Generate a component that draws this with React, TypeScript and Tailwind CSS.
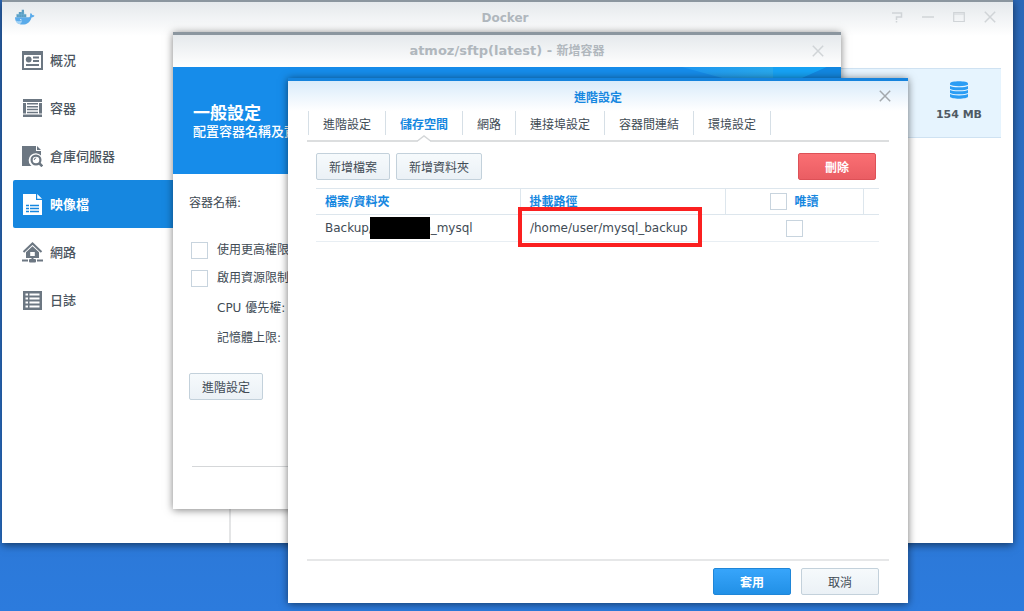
import type { ReactNode } from 'react';
import clsx from 'clsx';

// ---------------------------------------------------------------------------
// Icons
// ---------------------------------------------------------------------------

function WhaleIcon() {
  return (
    <svg width="21" height="17" viewBox="0 0 21 17" aria-hidden>
      <path d="M1 8.2h13.6c1.1 0 1.6-.6 1.5-1.8-.1-.9.1-1.7.7-2.4.9.6 1.3 1.3 1.4 2.2.8-.2 1.6 0 2.3.5-.6 1.2-1.6 1.7-3 1.7C16.300 13 13.300 15.500 8.500 15.500 3.600 15.500 1 12.700 1 8.200z" fill="#5aabea" />
      <path d="M2.500 5.300h9.800v2.900H2.500zM4.800 3h5.200v2.300H4.800zM7.700.8H10V3H7.700z" fill="#5a9dc2" />
      <path d="M5 5.300v2.900M7.400 3v5.200M9.900 3v5.200M2.500 5.300H12" stroke="#79bbdf" strokeWidth=".4" />
      <path d="M1.500 11.500c2.500 1.300 5 .9 6.600-.3-.2 2-1 3.300-2.300 3.900-2.300-.4-3.700-1.700-4.300-3.600z" fill="#a5d3f5" />
      <circle cx="6.800" cy="10.600" r=".6" fill="#fff" />
    </svg>
  );
}

function OverviewIcon() {
  return (
    <svg width="21" height="21" viewBox="0 0 21 21" aria-hidden>
      <path d="M0 1h21v19H0zM2 5v13h17V5z" fill="currentColor" fillRule="evenodd" />
      <circle cx="6.700" cy="9.500" r="2.900" fill="currentColor" />
      <path d="M11 7.500h6M11 11h6M4 15h13" stroke="currentColor" strokeWidth="1.800" />
    </svg>
  );
}

function ContainerIcon() {
  return (
    <svg width="21" height="21" viewBox="0 0 21 21" aria-hidden>
      <path d="M1 1h19v3H1zM1 16.500h19v2.500H1zM1 5h3v10.500H1zM17 5h3v10.500h-3z" fill="currentColor" />
      <path d="M5 5.800h11M5 8.700h11M5 11.600h11M5 14.500h11" stroke="currentColor" strokeWidth="1.500" />
    </svg>
  );
}

function RegistryIcon() {
  return (
    <svg width="21" height="21" viewBox="0 0 21 21" aria-hidden>
      <path d="M0 0h14v5h5v4.500a7 7 0 0 0-10.500 9.500l1 1H0z" fill="currentColor" />
      <path d="M15 0l4 4h-4z" fill="currentColor" />
      <circle cx="14" cy="14" r="4.400" fill="none" stroke="currentColor" strokeWidth="2.200" />
      <path d="M17 17l3.300 3.300" stroke="currentColor" strokeWidth="2.600" />
      <path d="M12.200 14a2 2 0 0 1 2-2" fill="none" stroke="currentColor" />
    </svg>
  );
}

function ImageIcon() {
  return (
    <svg width="21" height="21" viewBox="0 0 21 21" aria-hidden>
      <path d="M1 0h13v6h6v15H1z" fill="currentColor" />
      <path d="M15.200 0L20 4.800h-4.800z" fill="currentColor" />
      <path d="M4 11.500h3M8 11.500h9M4 14.500h3M8 14.500h9M4 17.500h3M8 17.500h9" stroke="#1687e0" strokeWidth="1.400" />
    </svg>
  );
}

function NetworkIcon() {
  return (
    <svg width="21" height="21" viewBox="0 0 21 21" aria-hidden>
      <path d="M1.500 10L10.500 1.500l9 8.500" fill="none" stroke="currentColor" strokeWidth="2" />
      <path d="M10.500 4.300l6.500 6V16H4v-5.700zM8.200 10v4h4.600v-4z" fill="currentColor" fillRule="evenodd" />
      <path d="M0 18.500h6M15 18.500h6M10.500 15v3" stroke="currentColor" strokeWidth="2" />
      <rect x="7" y="17" width="7" height="3.500" rx="1" fill="currentColor" />
    </svg>
  );
}

function LogIcon() {
  return (
    <svg width="21" height="21" viewBox="0 0 21 21" aria-hidden>
      <path d="M1 1h19v19H1z" fill="currentColor" />
      <path d="M3.500 4.500H6M7.500 4.500h10M3.500 8.500H6M7.500 8.500h10M3.500 12.500H6M7.500 12.500h10M3.500 16.500H6M7.500 16.500h10" stroke="#fff" strokeWidth="2" />
    </svg>
  );
}

function DatabaseIcon() {
  return (
    <svg width="18" height="18" viewBox="0 0 18 18" aria-hidden>
      <path d="M0 2.500C0-.4 18-.4 18 2.500v13c0 2.900-18 2.900-18 0z" fill="#2b9df4" />
      <path d="M0 4.200c2 2 16 2 18 0M0 8.300c2 2 16 2 18 0M0 12.400c2 2 16 2 18 0" fill="none" stroke="#e6f4fe" strokeWidth="1.100" />
    </svg>
  );
}

function CloseIcon() {
  return (
    <svg width="12" height="12" viewBox="0 0 12 12" aria-hidden>
      <path d="M.8.8l10.400 10.400M11.200.8L.8 11.200" stroke="currentColor" strokeWidth="1.500" />
    </svg>
  );
}

function HelpIcon() {
  return (
    <svg width="12" height="12" viewBox="0 0 12 12" aria-hidden>
      <path d="M1 2h9.500v4H5.500v3M5.500 10v1.500" fill="none" stroke="currentColor" strokeWidth="1.500" />
    </svg>
  );
}

function MinimizeIcon() {
  return (
    <svg width="12" height="12" viewBox="0 0 12 12" aria-hidden>
      <path d="M0 6h12" stroke="currentColor" strokeWidth="1.500" />
    </svg>
  );
}

function MaximizeIcon() {
  return (
    <svg width="12" height="12" viewBox="0 0 12 12" aria-hidden>
      <path d="M.7 1.500h10.600v9H.7zM.7 3h10.600" fill="none" stroke="currentColor" strokeWidth="1.200" />
    </svg>
  );
}

// ---------------------------------------------------------------------------
// Shared controls
// ---------------------------------------------------------------------------

const buttonStyles = {
  plain: 'border-[#c3d1db] bg-linear-to-b from-[#f6fafc] to-[#ebf1f6] text-[#414b55]',
  primary: 'border-[#1f86d8] bg-linear-to-b from-[#37a5fb] to-[#2190e6] font-bold text-white',
  danger: 'border-[#dd5157] bg-linear-to-b from-[#fa6f73] to-[#ea5d63] font-bold text-white',
};

interface ButtonProps {
  variant?: keyof typeof buttonStyles;
  wide?: boolean;
  children: ReactNode;
}

function Button({ variant = 'plain', wide, children }: ButtonProps) {
  return (
    <button
      type="button"
      className={clsx(
        'flex h-[27px] items-center justify-center rounded-xs border pt-0.5 text-xs',
        wide ? 'w-[78px]' : 'px-3',
        buttonStyles[variant],
      )}
    >
      {children}
    </button>
  );
}

const checkboxClass = 'block size-[17px] shrink-0 appearance-none border border-[#c8d4de] bg-white';

// ---------------------------------------------------------------------------
// Main window
// ---------------------------------------------------------------------------

const navItems = [
  { label: '概況', icon: <OverviewIcon /> },
  { label: '容器', icon: <ContainerIcon /> },
  { label: '倉庫伺服器', icon: <RegistryIcon /> },
  { label: '映像檔', icon: <ImageIcon />, active: true },
  { label: '網路', icon: <NetworkIcon /> },
  { label: '日誌', icon: <LogIcon /> },
];

function DockerWindow() {
  return (
    <section className="absolute top-0 right-[11px] bottom-[68px] left-0.5 flex flex-col border-t-2 border-[#8b969f] bg-white shadow-[0_2px_8px_rgba(0,0,0,0.55)]">
      <header className="grid h-[34px] shrink-0 grid-cols-[1fr_auto_1fr] items-center bg-linear-to-b from-[#e5e9ec] to-white pr-[17px] pb-1 pl-3">
        <WhaleIcon />
        <h1 className="pt-0.5 text-xs font-bold text-[#b0b7bd]">Docker</h1>
        <div className="flex justify-end gap-[19px] text-[#d0d4d7]">
          <button type="button" aria-label="說明"><HelpIcon /></button>
          <button type="button" aria-label="最小化"><MinimizeIcon /></button>
          <button type="button" aria-label="最大化"><MaximizeIcon /></button>
          <button type="button" aria-label="關閉"><CloseIcon /></button>
        </div>
      </header>
      <div className="flex min-h-0 flex-1">
        <nav className="w-[229px] shrink-0 border-r-2 border-[#e4e5e6] pl-[11px]">
          {navItems.map((item) => (
            <a
              key={item.label}
              href="#"
              className={clsx(
                'flex h-12 items-center gap-[7px] rounded-xs pl-[9px] text-[13px]',
                item.active ? 'bg-[#1687e0] font-bold text-white' : 'font-medium text-[#6c7782]',
              )}
            >
              {item.icon}
              <span className={clsx('pt-0.5', item.active ? 'text-white' : 'text-[#4b5560]')}>{item.label}</span>
            </a>
          ))}
        </nav>
        <main className="flex-1 pt-8 pr-3 pl-3">
          <div className="flex h-[70px] justify-end border-y border-[#cfe2f2] bg-[#e6f4fe] pr-[19px]">
            <div className="flex flex-col items-center gap-2 pt-3 text-[11px] font-bold text-[#505a64]">
              <DatabaseIcon />
              <span className="leading-4">154 MB</span>
            </div>
          </div>
        </main>
      </div>
    </section>
  );
}

// ---------------------------------------------------------------------------
// New container wizard
// ---------------------------------------------------------------------------

function WizardWindow() {
  return (
    <section className="absolute top-8 right-[183px] bottom-[102px] left-[173px] flex flex-col border-t-3 border-[#8b969f] bg-white shadow-[0_1px_8px_rgba(0,0,0,0.5)]">
      <header className="grid h-8 shrink-0 grid-cols-[1fr_auto_1fr] items-center bg-linear-to-b from-[#e5e9ec] to-white px-[17px]">
        <h2 className="col-start-2 text-[13px] font-bold text-[#b0b7bd]">
          atmoz/sftp(latest) - <span className="text-xs">新增容器</span>
        </h2>
        <button type="button" aria-label="關閉" className="justify-self-end text-[#d0d4d7]"><CloseIcon /></button>
      </header>
      <div className="relative flex h-[107px] shrink-0 flex-col justify-center bg-[#168cea] pt-[3px] pl-5 text-white">
        <svg className="absolute top-0 right-0" width="180" height="107" viewBox="0 0 180 107" aria-hidden>
          <defs>
            <linearGradient id="banner" x1="0" x2="1">
              <stop offset="0" stopColor="#1e97f0" />
              <stop offset="1" stopColor="#28a8ec" />
            </linearGradient>
          </defs>
          <path d="M21 0h91v12H65z" fill="url(#banner)" />
          <path d="M112 0h54l-27 12h-27z" fill="#16a2f4" />
          <path d="M166 0h14v12h-41z" fill="#1287e0" />
        </svg>
        <h3 className="text-[17px] leading-5 font-bold">一般設定</h3>
        <p className="text-[13px] leading-[18px] font-medium">配置容器名稱及資</p>
      </div>
      <form className="flex flex-1 flex-col items-start pt-5 pl-4 text-xs leading-[18px] text-[#414b55]">
        <p>容器名稱:</p>
        <label className="mt-[29px] flex items-center gap-[9px] pl-0.5">
          <input type="checkbox" className={checkboxClass} />
          使用更高權限執行容器
        </label>
        <label className="mt-2.5 flex items-center gap-[9px] pl-0.5">
          <input type="checkbox" className={checkboxClass} />
          啟用資源限制
        </label>
        <p className="mt-3 pl-7">CPU 優先權:</p>
        <p className="mt-3 mb-[26px] pl-7">記憶體上限:</p>
        <Button>進階設定</Button>
      </form>
      <footer className="mr-5 ml-[19px] h-[43px] shrink-0 border-t border-[#d5d7d9]" />
    </section>
  );
}

// ---------------------------------------------------------------------------
// Advanced settings dialog
// ---------------------------------------------------------------------------

const tabs = ['進階設定', '儲存空間', '網路', '連接埠設定', '容器間連結', '環境設定'];
const activeTab = '儲存空間';

function VolumeTable() {
  return (
    <div className="relative">
      <table className="w-full table-fixed border-collapse text-left text-xs text-[#414b55]">
        <colgroup>
          <col className="w-[36.4%]" />
          <col className="w-[36.4%]" />
          <col />
          <col className="w-4" />
        </colgroup>
        <thead>
          <tr className="h-[26px] border-y border-[#dde6ed] text-[#1687e0]">
            <th className="border-r border-[#dde6ed] py-0 pl-[9px] font-bold">檔案/資料夾</th>
            <th className="border-r border-[#dde6ed] py-0 pl-2 font-bold">掛載路徑</th>
            <th className="border-r border-[#dde6ed] p-0 font-bold">
              <label className="flex items-center justify-center gap-[7px]">
                <input type="checkbox" className={checkboxClass} />
                唯讀
              </label>
            </th>
            <th className="p-0" />
          </tr>
        </thead>
        <tbody>
          <tr className="h-[27px] border-b border-[#e8eef3]">
            <td className="py-0 pl-[9px]">
              <div className="flex items-center">
                <span>Backup/</span>
                <span className="relative z-10 -mr-[7px] -ml-[3px] h-[22px] w-[60px] bg-black" />
                <span>p_mysql</span>
              </div>
            </td>
            <td className="py-0 pl-[9px]">/home/user/mysql_backup</td>
            <td className="p-0">
              <input type="checkbox" aria-label="唯讀" className={clsx(checkboxClass, 'mx-auto')} />
            </td>
            <td className="p-0" />
          </tr>
        </tbody>
      </table>
      {/* Highlight around the mount path */}
      <div className="pointer-events-none absolute top-[19px] left-[202px] h-10 w-[184px] border-4 border-[#fb2020]" />
    </div>
  );
}

function AdvancedDialog() {
  return (
    <section
      role="dialog"
      aria-labelledby="advanced-title"
      className="absolute top-[78px] right-[116px] bottom-2 left-[288px] flex flex-col border-t-3 border-[#1583dd] bg-white shadow-[0_1px_8px_rgba(0,0,0,0.55)]"
    >
      <header className="grid h-[30px] shrink-0 grid-cols-[1fr_auto_1fr] items-center bg-linear-to-b from-[#d9ebfa] to-white px-[17px]">
        <h2 id="advanced-title" className="col-start-2 pt-1 text-xs font-bold text-[#1687e0]">進階設定</h2>
        <button type="button" aria-label="關閉" className="justify-self-end text-[#a3a8ac]"><CloseIcon /></button>
      </header>
      <div role="tablist" className="mx-[19px] flex h-[31px] shrink-0 border-b-2 border-[#dcdedf] pl-px">
        {tabs.map((tab) => {
          const active = tab === activeTab;
          return (
            <button
              key={tab}
              type="button"
              role="tab"
              aria-selected={active}
              className={clsx(
                'relative h-6 border-r border-[#d6dfe6] px-3.5 pt-1 text-xs whitespace-nowrap first:border-l',
                active ? 'font-bold text-[#1687e0]' : 'text-[#414b55]',
              )}
            >
              {tab}
              {active && (
                <svg className="absolute top-6 left-1/2 -translate-x-1/2" width="14" height="7" viewBox="0 0 14 7" aria-hidden>
                  <path d="M0 7L7 .8 14 7z" fill="#fff" />
                  <path d="M0 6.300L7 .9l7 5.400" fill="none" stroke="#d3d6d8" strokeWidth="1.400" />
                </svg>
              )}
            </button>
          );
        })}
      </div>
      <div className="flex-1 pt-[11px] pr-[29px] pl-7">
        <div className="mb-2 flex gap-1.5 pr-[3px]">
          <Button>新增檔案</Button>
          <Button>新增資料夾</Button>
          <div className="ml-auto">
            <Button variant="danger" wide>刪除</Button>
          </div>
        </div>
        <VolumeTable />
      </div>
      <footer className="mx-[19px] flex h-11 shrink-0 justify-end gap-2.5 border-t-2 border-[#e6e7e8] pt-[7px] pr-2.5">
        <Button variant="primary" wide>套用</Button>
        <Button wide>取消</Button>
      </footer>
    </section>
  );
}

// ---------------------------------------------------------------------------
// Desktop
// ---------------------------------------------------------------------------

export default function App() {
  return (
    <div
      lang="zh-Hant"
      className="relative h-screen min-h-[560px] overflow-hidden bg-linear-to-b from-[#2c69b8] to-[#2c7bdd] font-['DejaVu_Sans','Noto_Sans_CJK_TC',sans-serif]"
    >
      <DockerWindow />
      <WizardWindow />
      <AdvancedDialog />
    </div>
  );
}
